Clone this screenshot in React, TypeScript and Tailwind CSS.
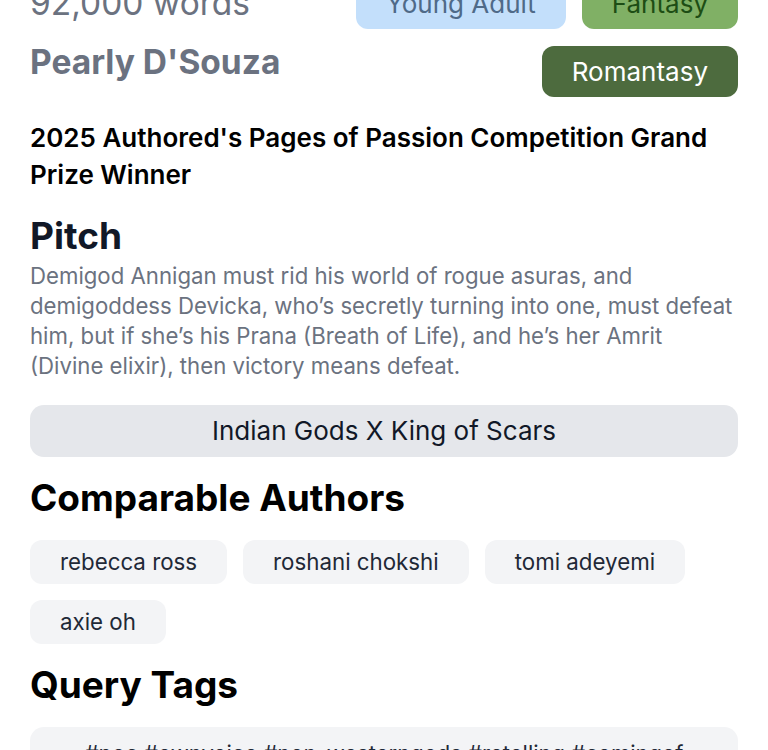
import React from "react";

const authors = ["rebecca ross", "roshani chokshi", "tomi adeyemi", "axie oh"];

export default function App() {
  return (
    <div
      className="min-h-[750px] w-full overflow-hidden bg-white"
      style={{ fontFamily: "Inter, 'Noto Sans', sans-serif" }}
    >
      <div className="mt-[-17px] px-[30px]">
        {/* Header */}
        <div className="flex items-start justify-between">
          <div className="flex flex-col">
            <div className="text-[33.5px] leading-[40px] text-[#6b7280]">92,000 words</div>
            <div className="mt-[17px] text-[33.5px] font-bold leading-[44px] text-[#6b7280]">
              Pearly D'Souza
            </div>
          </div>
          <div className="mt-[-5px] flex max-w-[400px] flex-wrap justify-end gap-x-4 gap-y-[17px]">
            <span className="rounded-[12px] bg-[#c3dffb] px-[30px] py-[10px] text-[26px] leading-[31px] text-[#4f6a88]">
              Young Adult
            </span>
            <span className="rounded-[12px] bg-[#80b065] px-[30px] py-[10px] text-[26px] leading-[31px] text-[#1d4d14]">
              Fantasy
            </span>
            <span className="rounded-[12px] bg-[#4d6b3e] px-[30px] py-[10px] text-[26px] leading-[31px] text-white">
              Romantasy
            </span>
          </div>
        </div>

        {/* Award */}
        <div className="mt-[22px] text-[26px] font-semibold leading-[37px] text-black">
          2025 Authored's Pages of Passion Competition Grand Prize Winner
        </div>

        {/* Pitch */}
        <h2 className="mt-[23px] text-[37px] font-bold leading-[40px] text-[#111827]">Pitch</h2>
        <p className="mt-[5px] text-[22.2px] leading-[30px] text-[#6b7280]">
          Demigod Annigan must rid his world of rogue asuras, and demigoddess Devicka, who’s
          secretly turning into one, must defeat him, but if she’s his Prana (Breath of Life), and
          he’s her Amrit (Divine elixir), then victory means defeat.
        </p>

        {/* Comps */}
        <div className="mt-[24px] rounded-[14px] bg-[#e5e7eb] py-[10px] text-center text-[26px] leading-[32px] text-[#111827]">
          Indian Gods X King of Scars
        </div>

        {/* Comparable Authors */}
        <h2 className="mt-[21px] text-[37px] font-bold leading-[40px] text-black">
          Comparable Authors
        </h2>
        <div className="mt-[22px] flex flex-wrap gap-4">
          {authors.map((a) => (
            <span
              key={a}
              className="rounded-[12px] bg-[#f3f4f6] px-[30px] py-[8px] text-[22.3px] leading-[28px] text-[#1f2937]"
            >
              {a}
            </span>
          ))}
        </div>

        {/* Query Tags */}
        <h2 className="mt-[21px] text-[37px] font-bold leading-[40px] text-black">Query Tags</h2>
        <div className="mt-[22px] rounded-[14px] bg-[#f3f4f6] px-[50px] py-[10px] text-center text-[22px] leading-[32px] text-[#1f2937]">
          #poc #ownvoice #non-westerngods #retelling #comingof age #slowburn
        </div>
        <div className="h-[40px]" />
      </div>
    </div>
  );
}
